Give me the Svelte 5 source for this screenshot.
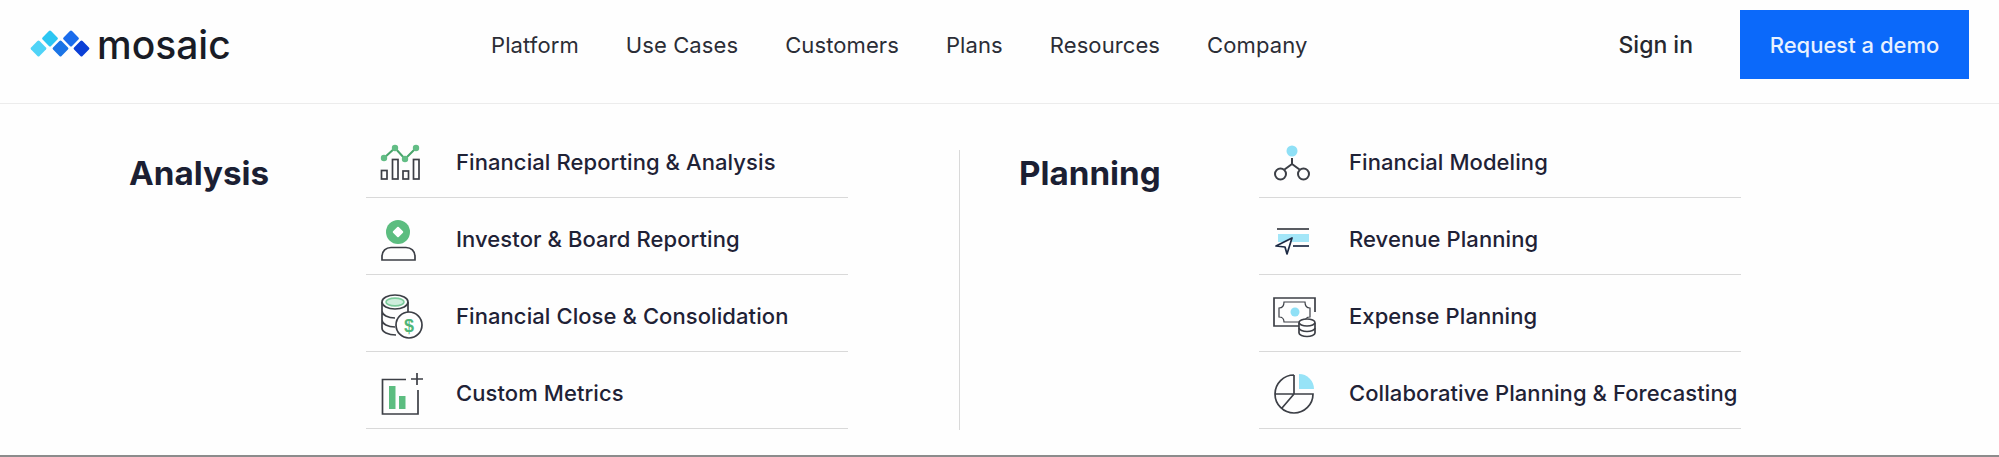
<script lang="ts">
	const nav = ['Platform', 'Use Cases', 'Customers', 'Plans', 'Resources', 'Company'];

	const groups = [
		{
			title: 'Analysis',
			items: [
				{ label: 'Financial Reporting & Analysis', icon: 'reporting' },
				{ label: 'Investor & Board Reporting', icon: 'investor' },
				{ label: 'Financial Close & Consolidation', icon: 'close' },
				{ label: 'Custom Metrics', icon: 'metrics' }
			]
		},
		{
			title: 'Planning',
			items: [
				{ label: 'Financial Modeling', icon: 'modeling' },
				{ label: 'Revenue Planning', icon: 'revenue' },
				{ label: 'Expense Planning', icon: 'expense' },
				{ label: 'Collaborative Planning & Forecasting', icon: 'forecast' }
			]
		}
	];
</script>

<div class="page">
	<header>
		<div class="logo">
			<svg width="62" height="30" viewBox="0 0 62 30" aria-hidden="true">
				<rect x="2.5" y="12.5" width="12" height="12" rx="1.5" transform="rotate(45 8.5 18.5)" fill="#4fd3f7" />
				<rect x="14" y="2.5" width="12" height="12" rx="1.5" transform="rotate(45 20 8.5)" fill="#2cc6f2" />
				<rect x="24.5" y="12.5" width="12" height="12" rx="1.5" transform="rotate(45 30.5 18.5)" fill="#1b74e6" />
				<rect x="35" y="2.5" width="12" height="12" rx="1.5" transform="rotate(45 41 8.5)" fill="#1a6cec" />
				<rect x="45.5" y="12.5" width="12" height="12" rx="1.5" transform="rotate(45 51.5 18.5)" fill="#0a3fd6" />
			</svg>
			<span class="wordmark">mosaic</span>
		</div>
		<nav>
			{#each nav as item}
				<span>{item}</span>
			{/each}
		</nav>
		<div class="actions">
			<span class="signin">Sign in</span>
			<span class="demo">Request a demo</span>
		</div>
	</header>

	<main>
		{#each groups as group, g}
			{#if g > 0}
				<div class="divider"></div>
			{/if}
			<section class="group">
				<h2 class:wide={g > 0}>{group.title}</h2>
				<ul>
					{#each group.items as item}
						<li>
							<svg class="icon" width="90" height="76" viewBox="0 0 90 76" fill="none" stroke="#3c3f46" stroke-width="1.7" aria-hidden="true">
								{#if item.icon === 'reporting'}
									<path d="M18 37 29 27 39 38 50 27" stroke="#4aa56c" stroke-width="2" />
									<circle cx="18" cy="37" r="3.200" fill="#62bd85" stroke="none" />
									<circle cx="29" cy="27" r="3.200" fill="#62bd85" stroke="none" />
									<circle cx="39" cy="38" r="3.200" fill="#62bd85" stroke="none" />
									<circle cx="50" cy="27" r="3.200" fill="#62bd85" stroke="none" />
									<rect x="15.500" y="49.500" width="5.500" height="8.500" />
									<rect x="26.500" y="38.500" width="5.500" height="19.500" />
									<rect x="37" y="50" width="5.500" height="8" />
									<rect x="47.500" y="38.500" width="5.500" height="19.500" />
								{:else if item.icon === 'investor'}
									<circle cx="32" cy="34" r="12" fill="#5cbd80" stroke="none" />
									<rect x="28" y="30" width="8" height="8" rx="1" transform="rotate(45 32 34)" fill="#fff" stroke="none" />
									<path d="M16 62V58.500C16 53 20 49.500 25 49.500H40C45 49.500 49 53 49 58.500V62Z" />
								{:else if item.icon === 'close'}
									<ellipse cx="29" cy="27" rx="13" ry="7" />
									<ellipse cx="29" cy="27" rx="9" ry="3.800" fill="#cfeedd" stroke="#7ccb9b" />
									<path d="M16 27V53C16 57 22 60 30 60M16 36C16 40 22 43 29 43M16 45C16 49 22 52 29 52M42 27V38" />
									<circle cx="43" cy="50" r="13" fill="#fff" />
									<text x="43" y="56.500" class="dollar">$</text>
								{:else if item.icon === 'metrics'}
									<path d="M40 27.500H16.500V62H52V38" />
									<path d="M51 21V33M45 27H57" />
									<rect x="23" y="34" width="6.500" height="23" fill="#5cbd80" stroke="none" />
									<rect x="33" y="44" width="6.500" height="13" fill="#5cbd80" stroke="none" />
								{:else if item.icon === 'modeling'}
									<circle cx="33" cy="30" r="5.500" fill="#8fe0f6" stroke="none" />
									<path d="M33 37V43L25.500 48.500M33 43 40.500 48.500" stroke-width="2" />
									<circle cx="21.500" cy="53" r="5.500" stroke-width="2" />
									<circle cx="44.500" cy="53" r="5.500" stroke-width="2" />
								{:else if item.icon === 'revenue'}
									<path d="M18 31H50" />
									<rect x="19" y="36" width="31" height="8" fill="#a3e6f8" stroke="none" />
									<path d="M34 48H50" stroke="#1d2a44" />
									<path d="M17 48 33 40 28 56 26 49Z" fill="#fff" stroke="#1d2a44" stroke-linejoin="round" />
								{:else if item.icon === 'expense'}
									<path d="M40 51H15V23H56V37" />
									<path d="M25 27H46C46 31 48 33 51 33V42C48 42 46 44 46 47H25C25 44 23 42 20 42V33C23 33 25 31 25 27Z" stroke-width="1.200" />
									<circle cx="36" cy="37" r="4.500" fill="#8fe0f6" stroke="none" />
									<path d="M40 48V58C40 60 44 61.500 48 61.500S56 60 56 58V48" fill="#fff" />
									<ellipse cx="48" cy="47.500" rx="8" ry="3.500" fill="#fff" />
									<path d="M40 53C40 55 44 56.500 48 56.500S56 55 56 53" />
								{:else if item.icon === 'forecast'}
									<path d="M40 22A15 15 0 0 1 55 37H40Z" fill="#97e3f7" stroke="none" />
									<path d="M35 23A19 19 0 1 0 54 42H16M35 23V42L23 56" />
								{/if}
							</svg>
							<span>{item.label}</span>
						</li>
					{/each}
				</ul>
			</section>
		{/each}
	</main>
</div>

<style>
	:global(body) {
		margin: 0;
		background: #fefefe;
	}

	.page {
		height: 457px;
		box-sizing: border-box;
		border-bottom: 2px solid #8c8c8c;
		overflow: hidden;
		font-family: Inter, 'Liberation Sans', sans-serif;
		color: #1b1f33;
	}

	header {
		display: flex;
		align-items: center;
		height: 89px;
		padding: 0 30px 14px;
		border-bottom: 1px solid #ececec;
	}

	.logo {
		display: flex;
		align-items: center;
		gap: 5px;
		width: 461px;
	}

	.wordmark {
		font-size: 39px;
		font-weight: 500;
		line-height: 1;
		color: #191c26;
	}

	nav {
		display: flex;
		gap: 47px;
		font-size: 22px;
		letter-spacing: 0.1px;
		color: #2b2d36;
	}

	.actions {
		display: flex;
		align-items: center;
		gap: 47px;
		margin-left: auto;
		font-size: 23px;
	}

	.signin {
		font-weight: 500;
		color: #26282f;
	}

	.demo {
		display: flex;
		align-items: center;
		justify-content: center;
		width: 229px;
		height: 69px;
		background: #0b69fa;
		color: #e8f1ff;
		font-weight: 500;
		font-size: 22px;
	}

	main {
		display: flex;
		padding: 17px 0 0 129px;
	}

	.group {
		display: flex;
	}

	h2 {
		width: 237px;
		margin: 32px 0 0;
		font-size: 33.200px;
		font-weight: 700;
		line-height: 40px;
	}

	h2.wide {
		width: 240px;
	}

	ul {
		width: 482px;
		margin: 0;
		padding: 0;
		list-style: none;
	}

	li {
		display: flex;
		align-items: center;
		height: 76px;
		border-bottom: 1px solid #d9d9d9;
	}

	.icon {
		flex: none;
	}

	li span {
		font-size: 22px;
		font-weight: 500;
		letter-spacing: 0.08px;
		color: #1f2236;
		white-space: nowrap;
		margin-top: 6px;
	}

	.dollar {
		font-family: 'Liberation Sans', sans-serif;
		font-size: 18px;
		font-weight: 700;
		text-anchor: middle;
		fill: #4fb678;
		stroke: none;
	}

	.divider {
		width: 1px;
		height: 280px;
		margin: 29px 59px 0 111px;
		background: #d9d9d9;
	}
</style>
